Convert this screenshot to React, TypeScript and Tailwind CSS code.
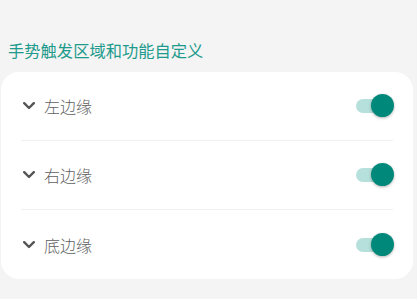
import { useState } from 'react'

const rows = ['左边缘', '右边缘', '底边缘']

export default function App() {
  return (
    <div
      className="w-[417px] h-[299px] bg-[#f4f4f4] overflow-hidden"
      style={{ fontFamily: '"Noto Sans CJK SC", "Noto Sans", sans-serif' }}
    >
      <div className="h-[72px] flex items-end pl-[8px] pb-[14px]">
        <span className="text-[16.3px] leading-none text-[#1e9b8c]">手势触发区域和功能自定义</span>
      </div>
      <div className="ml-[1px] w-[412px] bg-white rounded-[18px]">
        {rows.map((label, i) => (
          <Row key={label} label={label} last={i === rows.length - 1} />
        ))}
      </div>
    </div>
  )
}

function Row({ label, last }: { label: string; last: boolean }) {
  const [on, setOn] = useState(true)
  return (
    <div className="px-[20px]">
      <div className={`h-[69px] flex items-center ${last ? '' : 'border-b border-[#f1f1f1]'}`}>
        <svg width="12" height="8" viewBox="0 0 12 8" className="ml-[2px] mr-[9px]">
          <path d="M1.2 1.2 L6 6 L10.8 1.2" fill="none" stroke="#555" strokeWidth="2.4" strokeLinecap="round" strokeLinejoin="round" />
        </svg>
        <span className="text-[16px] leading-none font-light text-[#5f5f5f]">{label}</span>
        <button onClick={() => setOn(!on)} className="ml-auto relative w-[38px] h-[24px] mr-[-1px]">
          <span className="absolute left-0 top-[5px] w-[34px] h-[14px] rounded-full bg-[#b6e0dc]" />
          <span className="absolute right-0 top-0 w-[23px] h-[23px] rounded-full bg-[#00897b] shadow-[0_1px_3px_rgba(0,0,0,0.3)]" />
        </button>
      </div>
    </div>
  )
}
